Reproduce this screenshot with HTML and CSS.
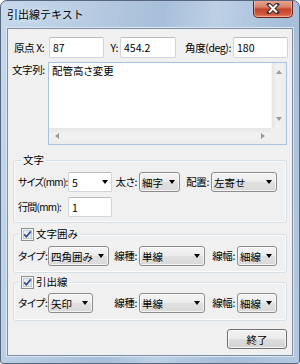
FILE: index.html
```html
<!DOCTYPE html>
<html lang="ja">
<head>
    <meta charset="UTF-8">
    <meta name="viewport" content="width=device-width, initial-scale=1.0">
    <title>引出線テキスト</title>
    <link rel="stylesheet" href="styles.css">
</head>
<body>
    <div class="window">
        <div class="titlebar">
            <span class="title">引出線テキスト</span>
            <button class="close" title="閉じる">
                <svg width="14" height="11" viewBox="0 0 14 11">
                    <path d="M3 1.5 L11 9.5 M11 1.5 L3 9.5" stroke="#3b2a2a" stroke-width="4" stroke-linecap="square"/>
                    <path d="M3 1.5 L11 9.5 M11 1.5 L3 9.5" stroke="#fff" stroke-width="2"/>
                </svg>
            </button>
        </div>
        <div class="client">
            <div class="row origin">
                <label class="lbl lbl-origin">原点 X:</label>
                <input class="field w55" type="text" value="87">
                <label class="lbl lbl-r w16">Y:</label>
                <input class="field w56" type="text" value="454.2">
                <label class="lbl lbl-r w57">角度(deg):</label>
                <input class="field w55" type="text" value="180">
            </div>
            <div class="row text-row">
                <label class="lbl lbl-text">文字列:</label>
                <div class="memo">
                    <div class="memo-top">
                        <div class="memo-text">配管高さ変更</div>
                        <div class="vscroll"><i class="tri up"></i><i class="tri down"></i></div>
                    </div>
                    <div class="memo-bottom">
                        <div class="hscroll"><i class="tri left"></i><i class="tri right"></i></div>
                        <div class="corner"></div>
                    </div>
                </div>
            </div>

            <fieldset class="group group-font">
                <legend>文字</legend>
                <div class="grow">
                    <label class="lbl narrow w50">サイズ(mm):</label>
                    <div class="combo edit w44"><span>5</span></div>
                    <label class="lbl lbl-r w27">太さ:</label>
                    <div class="combo w41"><span>細字</span></div>
                    <label class="lbl lbl-r w31">配置:</label>
                    <div class="combo w66"><span>左寄せ</span></div>
                </div>
                <div class="grow gap">
                    <label class="lbl narrow w50">行間(mm):</label>
                    <input class="field small w44" type="text" value="1">
                </div>
            </fieldset>

            <fieldset class="group group-frame">
                <legend class="check-legend">
                    <svg class="check" width="13" height="13" viewBox="0 0 13 13">
                        <rect x="0.5" y="0.5" width="12" height="12" fill="#f6f6f6" stroke="#8e8f8f"/>
                        <rect x="2.5" y="2.5" width="8" height="8" fill="#e9ecef" stroke="#c3c8ce"/>
                        <path d="M3.2 6.4 L5.4 8.8 L9.8 3.4" fill="none" stroke="#2f4f91" stroke-width="1.7"/>
                    </svg>
                    <span>文字囲み</span>
                </legend>
                <div class="grow">
                    <label class="lbl w30">タイプ:</label>
                    <div class="combo w61"><span>四角囲み</span></div>
                    <label class="lbl lbl-r w30">線種:</label>
                    <div class="combo w66"><span>単線</span></div>
                    <label class="lbl lbl-r w32">線幅:</label>
                    <div class="combo w40"><span>細線</span></div>
                </div>
            </fieldset>

            <fieldset class="group group-leader">
                <legend class="check-legend">
                    <svg class="check" width="13" height="13" viewBox="0 0 13 13">
                        <rect x="0.5" y="0.5" width="12" height="12" fill="#f6f6f6" stroke="#8e8f8f"/>
                        <rect x="2.5" y="2.5" width="8" height="8" fill="#e9ecef" stroke="#c3c8ce"/>
                        <path d="M3.2 6.4 L5.4 8.8 L9.8 3.4" fill="none" stroke="#2f4f91" stroke-width="1.7"/>
                    </svg>
                    <span>引出線</span>
                </legend>
                <div class="grow">
                    <label class="lbl w30">タイプ:</label>
                    <div class="combo w45"><span>矢印</span></div>
                    <label class="lbl lbl-r w46">線種:</label>
                    <div class="combo w66"><span>単線</span></div>
                    <label class="lbl lbl-r w32">線幅:</label>
                    <div class="combo w40"><span>細線</span></div>
                </div>
            </fieldset>

            <div class="footer">
                <button class="btn">終了</button>
            </div>
        </div>
    </div>
</body>
</html>
```

FILE: styles.css
```css
* {
    box-sizing: border-box;
}
body {
    margin: 0;
    background: #fff;
    font-family: "Noto Sans CJK JP", "Noto Sans", sans-serif;
    font-size: 10.5px;
    color: #000;
    font-feature-settings: "palt";
}
.window {
    width: 300px;
    height: 364px;
    border: 1px solid #56677e;
    border-radius: 7px 7px 3px 3px;
    background: linear-gradient(100deg, #c6d8ec 0%, #b7cbe2 25%, #a7bfda 45%, #bdd0e6 60%, #a6bed9 80%, #b4c9e1 100%);
    display: flex;
    flex-direction: column;
    overflow: hidden;
}
.titlebar {
    height: 27px;
    display: flex;
    justify-content: space-between;
    align-items: flex-start;
    padding: 0 6px 0 6px;
}
.title {
    font-size: 11px;
    line-height: 27px;
    font-feature-settings: normal;
    text-shadow: 0 0 6px rgba(255, 255, 255, 0.9);
}
.close {
    width: 40px;
    height: 18px;
    margin-top: -1px;
    padding: 0;
    border: 1px solid #6b2418;
    border-top: none;
    border-radius: 0 0 5px 5px;
    background: linear-gradient(#e9a999 0%, #d9836c 40%, #c2432b 55%, #d25a3f 85%, #e7866a 100%);
    box-shadow: inset 0 0 0 1px rgba(255, 220, 210, 0.45);
    display: flex;
    align-items: center;
    justify-content: center;
}
.client {
    flex: 1;
    margin: 0 6px 7px;
    border: 1px solid #7f8ea3;
    box-shadow: 0 0 0 1px #dbe6f3;
    background: #f0f0f0;
    padding: 8px 5px 0;
    display: flex;
    flex-direction: column;
}
.row {
    display: flex;
}
.origin {
    height: 21px;
}
.lbl {
    line-height: 20px;
    white-space: nowrap;
    flex: none;
    letter-spacing: -0.4px;
}
.lbl.narrow {
    font-size: 10px;
    letter-spacing: -0.7px;
}
.lbl-r {
    text-align: right;
    padding-right: 2px;
}
.origin .lbl {
    line-height: 21px;
}
.lbl-origin {
    width: 35px;
    margin-left: 1px;
}
.field {
    height: 21px;
    border: 1px solid #d2d5da;
    border-top-color: #b9bcc2;
    border-radius: 2px;
    background: #fff;
    font: inherit;
    font-feature-settings: "palt";
    padding: 0 3px;
    outline: none;
    flex: none;
}
.field.small {
    height: 20px;
}
.w16 { width: 16px; }
.w27 { width: 27px; }
.w30 { width: 30px; }
.w31 { width: 31px; }
.w32 { width: 32px; }
.w40 { width: 40px; }
.w41 { width: 41px; }
.w44 { width: 44px; }
.w45 { width: 45px; }
.w46 { width: 46px; }
.w50 { width: 50px; }
.w55 { width: 55px; }
.w56 { width: 56px; }
.w57 { width: 57px; }
.w61 { width: 61px; }
.w66 { width: 66px; }

.text-row {
    margin-top: 4px;
    height: 83px;
}
.lbl-text {
    width: 36px;
    margin-left: -1px;
    line-height: 14px;
    padding-top: 1px;
}
.memo {
    flex: 1;
    border: 1px solid #a7c2e2;
    display: flex;
    flex-direction: column;
    background: #fff;
}
.memo-top {
    flex: 1;
    display: flex;
}
.memo-text {
    flex: 1;
    padding: 1px 3px;
    line-height: 14px;
}
.vscroll {
    width: 15px;
    background: linear-gradient(90deg, #e6e6e6, #f2f2f2 40%, #ececec);
    border-left: 1px solid #f6f6f6;
    display: flex;
    flex-direction: column;
    justify-content: space-between;
    align-items: center;
    padding: 7px 0;
}
.memo-bottom {
    height: 16px;
    display: flex;
}
.hscroll {
    flex: 1;
    background: linear-gradient(#e6e6e6, #f2f2f2 40%, #ececec);
    display: flex;
    justify-content: space-between;
    align-items: center;
    padding: 0 6px;
}
.corner {
    width: 15px;
    background: #efefef;
}
.tri {
    width: 0;
    height: 0;
    border: 0 solid transparent;
}
.tri.up {
    border-width: 0 3.5px 4px;
    border-bottom-color: #9a9a9a;
}
.tri.down {
    border-width: 4px 3.5px 0;
    border-top-color: #9a9a9a;
}
.tri.left {
    border-width: 3.5px 4px 3.5px 0;
    border-right-color: #9a9a9a;
}
.tri.right {
    border-width: 3.5px 0 3.5px 4px;
    border-left-color: #9a9a9a;
}

.group {
    margin: 0;
    padding: 5px 0 5px 4px;
    border: 1px solid #d5dfe5;
    border-radius: 3px;
    box-shadow: inset 0 0 0 1px #fafbfc;
    min-width: 0;
}
.group legend {
    padding: 0 2px;
    margin-left: 3px;
    line-height: 14px;
    height: 14px;
}
.group .check-legend {
    margin-left: 1px;
    display: flex;
    align-items: center;
    gap: 2px;
}
.check {
    flex: none;
}
.group-font {
    margin-top: 8px;
}
.group-frame {
    margin-top: 4px;
    padding-bottom: 6px;
}
.group-leader {
    margin-top: 2px;
    padding-top: 4px;
    padding-bottom: 7px;
}
.grow {
    display: flex;
    height: 20px;
}
.grow.gap {
    margin-top: 5px;
}
.combo {
    height: 20px;
    flex: none;
    display: flex;
    align-items: center;
    justify-content: space-between;
    padding: 0 4px 0 2px;
    border: 1px solid #8c8c8c;
    border-radius: 3px;
    background: linear-gradient(#f5f5f5 0%, #ececec 48%, #e0e0e0 52%, #d9d9d9 100%);
    box-shadow: inset 0 0 0 1px rgba(255, 255, 255, 0.7);
}
.combo::after {
    content: "";
    border-style: solid;
    border-width: 4px 3.5px 0;
    border-color: #000 transparent transparent;
}
.combo.edit {
    background: #fff;
    border-color: #d2d5da;
    border-top-color: #b9bcc2;
    border-radius: 2px;
    box-shadow: none;
    padding: 0 3px 0 3px;
}
.footer {
    display: flex;
    justify-content: flex-end;
    margin-top: 8px;
}
.btn {
    width: 60px;
    height: 20px;
    padding: 0;
    font: inherit;
    font-feature-settings: "palt";
    color: #000;
    border: 1px solid #707070;
    border-radius: 3px;
    background: linear-gradient(#f3f3f3 0%, #ebebeb 48%, #dddddd 52%, #d3d3d3 100%);
    box-shadow: inset 0 0 0 1px rgba(255, 255, 255, 0.75);
}
```
